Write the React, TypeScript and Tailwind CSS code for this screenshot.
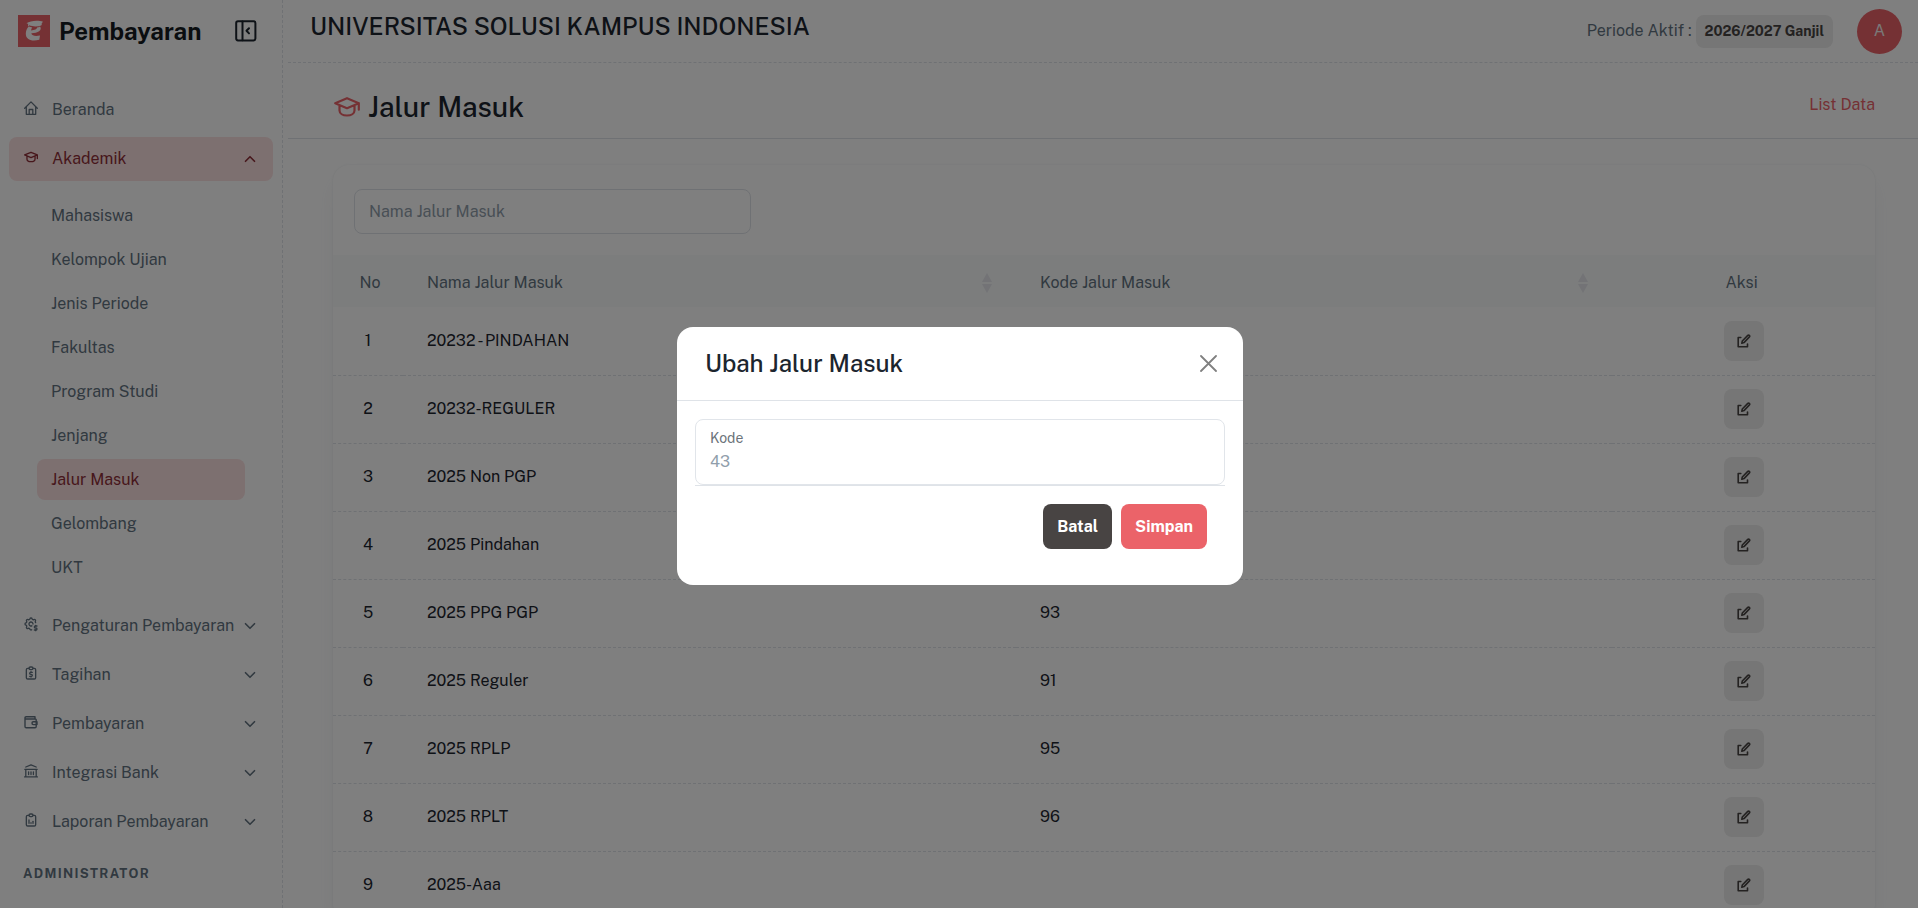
import type { ReactNode } from "react";
import { ChevronDown, ChevronUp } from "lucide-react";
import { TbReportAnalytics, TbReportMoney, TbSettingsDollar } from "react-icons/tb";

const submenu = [
  "Mahasiswa",
  "Kelompok Ujian",
  "Jenis Periode",
  "Fakultas",
  "Program Studi",
  "Jenjang",
  "Jalur Masuk",
  "Gelombang",
  "UKT",
];

const rows = [
  { nama: "20232 - PINDAHAN", kode: "" },
  { nama: "20232-REGULER", kode: "" },
  { nama: "2025 Non PGP", kode: "" },
  { nama: "2025 Pindahan", kode: "" },
  { nama: "2025 PPG PGP", kode: "93" },
  { nama: "2025 Reguler", kode: "91" },
  { nama: "2025 RPLP", kode: "95" },
  { nama: "2025 RPLT", kode: "96" },
  { nama: "2025-Aaa", kode: "" },
];

function LogoMark() {
  return (
    <svg width="32" height="32" viewBox="0 0 32 32" className="shrink-0" aria-hidden="true">
      <rect width="32" height="32" fill="#eb6369" />
      <path d="M8.500 8.300c3.500-2.800 12-3.300 16.500-1.600l-1.300 1.500c.3.900 0 1.800-.5 2.300-3.500 1.300-8.500 1.300-12-.2l-.3 1.200c-.9-.3-1.200-1.600-.6-2.400z" fill="#fff" />
      <path
        d="M22 11.500c2.800 3.500-2.500 6.800-8.700 6.700.4 2.700 4.300 3.300 8.700 2.300l-.7 4.300C13.500 27 7.800 24.500 7.800 18.800c0-3 1-5.500 3-7.300 1 .5 2.200.8 3.400 1-.8 1-1.100 2-1.100 3 3.500-.2 6.200-1.300 5.900-2.900 1.100-.2 2.200-.6 3-1.100z"
        fill="#fff"
      />
    </svg>
  );
}

function CollapseIcon() {
  return (
    <svg width="22" height="22" viewBox="0 0 22 22" fill="none" stroke="currentColor" strokeWidth="2" strokeLinecap="round" strokeLinejoin="round" aria-hidden="true">
      <rect x="1.200" y="1.200" width="19.200" height="19.200" rx="1.800" />
      <path d="M7.500 1.500v18.800M14 8.200l-2.500 2.600 2.500 2.600" />
    </svg>
  );
}

function CapIcon({ size, stroke }: { size: number; stroke: number }) {
  return (
    <svg width={size} height={size} viewBox="0 0 26 26" fill="none" stroke="currentColor" strokeWidth={stroke} strokeLinecap="round" strokeLinejoin="round" aria-hidden="true">
      <path d="M1.200 9.200 13 4.200l11.800 5-11.800 5zM24.800 9.200v6.500M5.500 11.500v5c0 3 3.200 5 7.500 5s7.500-2 7.500-5v-5" />
    </svg>
  );
}

function HomeIcon() {
  return (
    <svg width="14" height="14" viewBox="0 0 14 14" fill="none" stroke="currentColor" strokeWidth="1.300" strokeLinecap="round" strokeLinejoin="round" aria-hidden="true">
      <path d="M.7 7.200 7 .9l6.300 6.300M2.300 6v7.300h9.400V6M5.200 13V8.500h3.600V13" />
    </svg>
  );
}

function WalletIcon() {
  return (
    <svg width="14" height="14" viewBox="0 0 14 14" fill="none" stroke="currentColor" strokeWidth="1.400" strokeLinejoin="round" aria-hidden="true">
      <path d="M11 4V1.700H2.200c-.8 0-1.200.5-1.200 1.200v8.600c0 .8.500 1.200 1.200 1.200H11c.8 0 1.200-.4 1.200-1.200V5.200c0-.8-.4-1.200-1.200-1.200H1.500" />
      <path d="M13 6.700H9.200c-1 0-1.200.6-1.200 1.400s.3 1.500 1.200 1.500H13z" />
    </svg>
  );
}

function BankIcon() {
  return (
    <svg width="14" height="14" viewBox="0 0 14 14" fill="none" stroke="currentColor" strokeWidth="1.300" strokeLinecap="round" strokeLinejoin="round" aria-hidden="true">
      <path d="M1.800 3 7 .8 12.200 3M.8 5.300h12.400M1.800 5.500v7M12.200 5.500v7M.6 12.900h12.800M4.600 7.800v2.700M7 7.800v2.700M9.400 7.800v2.700" />
    </svg>
  );
}

function EditIcon() {
  return (
    <svg width="14" height="14" viewBox="0 0 14 14" fill="none" stroke="currentColor" strokeWidth="1.600" strokeLinecap="round" strokeLinejoin="round" aria-hidden="true">
      <path d="M3.800 3.500H1.200v9.300h9.300V10" />
      <path d="M4.800 9.300 5.300 7l5.500-5.600c1-.9 2.500.5 1.600 1.500L7 8.600z" />
    </svg>
  );
}

function SortIcon() {
  return (
    <svg width="10" height="20" viewBox="0 0 10 20" fill="#e6e6ec" aria-hidden="true">
      <path d="M5 0l5 9H0zM5 20l5-9H0z" />
    </svg>
  );
}

function MenuItem({
  icon,
  label,
  active = false,
  collapsible = true,
}: {
  icon: ReactNode;
  label: string;
  active?: boolean;
  collapsible?: boolean;
}) {
  return (
    <button
      type="button"
      className={`flex h-11 w-full items-center rounded-lg pr-[14px] pl-[15px] text-left ${
        active ? "bg-[#fbe0e1] text-[#8f2f38]" : "text-[#637381]"
      }`}
    >
      <span className="mb-1 flex w-[14px] shrink-0 justify-center">{icon}</span>
      <span className="ml-[14px] flex-1 whitespace-nowrap">{label}</span>
      {collapsible && (active ? <ChevronUp size={18} strokeWidth={2.2} /> : <ChevronDown size={18} strokeWidth={2.2} />)}
    </button>
  );
}

function Sidebar() {
  return (
    <aside className="w-[283px] shrink-0 border-r border-dashed border-[#dfe3e8] px-[9px]">
      <div className="flex h-[62px] items-center pr-4 pl-[9px]">
        <LogoMark />
        <span className="ml-[9px] flex-1 text-2xl font-bold text-[#141a21]">Pembayaran</span>
        <button type="button" aria-label="Tutup menu" className="text-[#1c252e]">
          <CollapseIcon />
        </button>
      </div>
      <nav className="mt-[26px] flex flex-col gap-[5px]">
        <MenuItem icon={<HomeIcon />} label="Beranda" collapsible={false} />
        <MenuItem icon={<CapIcon size={14} stroke={2.5} />} label="Akademik" active />
        <ul className="mt-[9px] mb-[11px] flex flex-col gap-[3px] px-7">
          {submenu.map((item) => (
            <li key={item}>
              <a
                href="#"
                className={`flex h-[41px] items-center rounded-lg px-[14px] ${
                  item === "Jalur Masuk" ? "bg-[#fbe0e1] text-[#8f2f38]" : "text-[#637381]"
                }`}
              >
                {item}
              </a>
            </li>
          ))}
        </ul>
        <MenuItem icon={<TbSettingsDollar size={16} className="shrink-0" />} label="Pengaturan Pembayaran" />
        <MenuItem icon={<TbReportMoney size={16} className="shrink-0" />} label="Tagihan" />
        <MenuItem icon={<WalletIcon />} label="Pembayaran" />
        <MenuItem icon={<BankIcon />} label="Integrasi Bank" />
        <MenuItem icon={<TbReportAnalytics size={16} className="shrink-0" />} label="Laporan Pembayaran" />
        <p className="mt-[15px] pl-[14px] text-[13px] leading-5 font-bold tracking-widest text-[#637381]">ADMINISTRATOR</p>
      </nav>
    </aside>
  );
}

function Topbar() {
  return (
    <header className="flex h-[63px] items-center border-b border-dashed border-[#dfe3e8] pr-4 pl-[22px]">
      <p className="mb-[10px] flex-1 text-2xl font-medium text-[#1c252e]">UNIVERSITAS SOLUSI KAMPUS INDONESIA</p>
      <p className="flex items-center gap-1 text-[#637381]">
        Periode Aktif :
        <span className="flex h-[33px] items-center rounded-lg bg-[#ececec] px-[9px] text-sm font-bold text-[#484443]">
          2026/2027 Ganjil
        </span>
      </p>
      <button type="button" className="ml-6 size-[45px] rounded-full bg-[#eb6369] text-[#f3f3f3]">
        A
      </button>
    </header>
  );
}

function DataTable() {
  return (
    <section className="rounded-2xl bg-white pt-6 shadow-[0_0_2px_0_rgba(145,158,171,0.2),0_12px_24px_-4px_rgba(145,158,171,0.12)]">
      <input
        type="text"
        aria-label="Nama Jalur Masuk"
        placeholder="Nama Jalur Masuk"
        className="ml-[21px] block h-[45px] w-[397px] rounded-lg border border-[#dfe3e8] px-[14px] placeholder:text-[#919eab]"
      />
      <table className="mt-[21px] w-full table-fixed text-left">
        <colgroup>
          <col className="w-[70px]" />
          <col />
          <col className="w-[596px]" />
          <col className="w-[263px]" />
        </colgroup>
        <thead>
          <tr className="h-[52px] bg-[#f8fbfa] text-[#637381]">
            <th className="pt-1 pl-1 text-center font-normal">No</th>
            <th className="px-6 pt-1 font-normal">
              <span className="flex items-center justify-between">
                Nama Jalur Masuk <SortIcon />
              </span>
            </th>
            <th className="px-6 pt-1 font-normal">
              <span className="flex items-center justify-between">
                Kode Jalur Masuk <SortIcon />
              </span>
            </th>
            <th className="pt-1 pr-1 text-center font-normal">Aksi</th>
          </tr>
        </thead>
        <tbody>
          {rows.map((row, index) => (
            <tr key={row.nama} className="h-[68px] border-b border-dashed border-[#dfe3e8] text-[#1c252e]">
              <td className="text-center">{index + 1}</td>
              <td className="px-6">{row.nama}</td>
              <td className="px-6">{row.kode}</td>
              <td>
                <button
                  type="button"
                  aria-label={`Ubah ${row.nama}`}
                  className="mx-auto flex size-10 items-center justify-center rounded-lg bg-[#ececec] text-[#484443]"
                >
                  <EditIcon />
                </button>
              </td>
            </tr>
          ))}
        </tbody>
      </table>
    </section>
  );
}

function EditModal() {
  return (
    <div className="fixed inset-0 flex items-center justify-center bg-black/50 pt-1 pl-0.5">
      <div role="dialog" aria-modal="true" aria-labelledby="modal-title" className="w-[566px] rounded-2xl bg-white">
        <div className="flex h-[74px] items-center justify-between border-b border-[#dfe3e8] pr-[26px] pl-7">
          <h2 id="modal-title" className="mb-0.5 text-2xl font-medium text-[#1c252e]">
            Ubah Jalur Masuk
          </h2>
          <button type="button" aria-label="Tutup" className="text-[#808080]">
            <svg width="17" height="17" viewBox="0 0 17 17" fill="none" stroke="currentColor" strokeWidth="1.800" strokeLinecap="round" aria-hidden="true">
              <path d="M1 1l15 15M16 1 1 16" />
            </svg>
          </button>
        </div>
        <form className="px-[18px] pt-[18px] pb-9">
          <div className="border-b border-[#dfe3e8]">
            <div className="rounded-lg border border-[#e1e5ea] px-[14px] pt-2 pb-[10px]">
              <label htmlFor="kode" className="mb-0.5 block text-sm leading-5 text-[#6c737a]">
                Kode
              </label>
              <input
                id="kode"
                type="text"
                placeholder="43"
                className="block h-6 w-full outline-none placeholder:text-[#919eab]"
              />
            </div>
          </div>
          <div className="mt-[18px] flex justify-end gap-[9px] pr-[18px]">
            <button type="button" className="h-[45px] rounded-lg bg-[#484443] px-[14px] font-bold text-white">
              Batal
            </button>
            <button type="button" className="h-[45px] rounded-lg bg-[#eb6369] px-[14px] font-bold text-white">
              Simpan
            </button>
          </div>
        </form>
      </div>
    </div>
  );
}

export default function App() {
  return (
    <div className="flex h-screen overflow-hidden bg-white font-['Public_Sans',Inter,sans-serif] text-base">
      <Sidebar />
      <main className="ml-[5px] min-w-0 flex-1">
        <Topbar />
        <div className="flex h-[76px] items-center justify-between border-b border-[#dfe3e8] pr-[43px] pl-[46px]">
          <h1 className="mt-3 flex items-center gap-2 text-[28px] font-medium text-[#1c252e]">
            <span className="text-[#eb6369]">
              <CapIcon size={26} stroke={2.2} />
            </span>
            Jalur Masuk
          </h1>
          <a href="#" className="mt-2 text-[#eb6369]">
            List Data
          </a>
        </div>
        <div className="pt-[26px] pr-[43px] pl-[45px]">
          <DataTable />
        </div>
      </main>
      <EditModal />
    </div>
  );
}
